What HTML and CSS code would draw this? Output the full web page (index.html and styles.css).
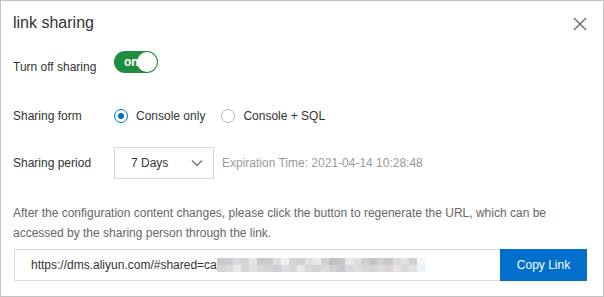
FILE: index.html
```html
<!DOCTYPE html>
<html>
<head>
<meta charset="utf-8">
<link rel="stylesheet" href="styles.css">
</head>
<body>
<div class="dialog">
  <div class="header">
    <div class="title">link sharing</div>
    <svg class="close" width="14" height="14" viewBox="0 0 14 14"><path d="M1 1L13 13M13 1L1 13" stroke="#6f7680" stroke-width="1.6" fill="none"/></svg>
  </div>
  <div class="row row-switch">
    <div class="label label-switch">Turn off sharing</div>
    <div class="switch"><span class="switch-text">on</span><span class="knob"></span></div>
  </div>
  <div class="row row-radio">
    <div class="label">Sharing form</div>
    <label class="radio"><span class="dot checked"></span>Console only</label>
    <label class="radio"><span class="dot"></span>Console + SQL</label>
  </div>
  <div class="row row-period">
    <div class="label">Sharing period</div>
    <div class="select"><span>7 Days</span>
      <svg width="12" height="8" viewBox="0 0 12 8"><path d="M1 1.5L6 6.5L11 1.5" stroke="#777" stroke-width="1.4" fill="none"/></svg>
    </div>
    <div class="expire">Expiration Time: 2021-04-14 10:28:48</div>
  </div>
  <p class="note">After the configuration content changes, please click the button to regenerate the URL, which can be accessed by the sharing person through the link.</p>
  <div class="link-row">
    <div class="link-input"><span>https://dms.aliyun.com/#shared=caf</span><svg class="blur" width="208" height="14" viewBox="0 0 208 14">
      <g>
        <rect x="0" y="0" width="8" height="7" fill="#c9c9cc"/><rect x="8" y="0" width="8" height="7" fill="#cbcbd3"/><rect x="16" y="0" width="8" height="7" fill="#dadade"/><rect x="24" y="0" width="8" height="7" fill="#d6d4d4"/><rect x="32" y="0" width="8" height="7" fill="#e6e6e4"/><rect x="40" y="0" width="8" height="7" fill="#c6cbca"/><rect x="48" y="0" width="8" height="7" fill="#c8cdcc"/><rect x="56" y="0" width="8" height="7" fill="#dddde0"/><rect x="64" y="0" width="8" height="7" fill="#eff0f1"/><rect x="72" y="0" width="8" height="7" fill="#d4d4d6"/><rect x="80" y="0" width="8" height="7" fill="#cfd1d0"/><rect x="88" y="0" width="8" height="7" fill="#dfe1de"/><rect x="96" y="0" width="8" height="7" fill="#e9e9e7"/><rect x="104" y="0" width="8" height="7" fill="#d0d0d0"/><rect x="112" y="0" width="8" height="7" fill="#c2bebf"/><rect x="120" y="0" width="8" height="7" fill="#cac7c9"/><rect x="128" y="0" width="8" height="7" fill="#e6eaee"/><rect x="136" y="0" width="8" height="7" fill="#dce0e4"/><rect x="144" y="0" width="8" height="7" fill="#cdcfd1"/><rect x="152" y="0" width="8" height="7" fill="#c3c5c6"/><rect x="160" y="0" width="8" height="7" fill="#cdcfd1"/><rect x="168" y="0" width="8" height="7" fill="#c8c8c8"/><rect x="176" y="0" width="8" height="7" fill="#dedad4"/><rect x="184" y="0" width="8" height="7" fill="#dde2e6"/><rect x="192" y="0" width="8" height="7" fill="#ced0d3"/><rect x="200" y="0" width="8" height="7" fill="#f2f6fa"/>
        <rect x="0" y="7" width="8" height="7" fill="#d3d3d3"/><rect x="8" y="7" width="8" height="7" fill="#dcdbd8"/><rect x="16" y="7" width="8" height="7" fill="#ebebee"/><rect x="24" y="7" width="8" height="7" fill="#d5d5d5"/><rect x="32" y="7" width="8" height="7" fill="#e1e0e0"/><rect x="40" y="7" width="8" height="7" fill="#d5d9d9"/><rect x="48" y="7" width="8" height="7" fill="#d1d3d4"/><rect x="56" y="7" width="8" height="7" fill="#cecccd"/><rect x="64" y="7" width="8" height="7" fill="#dcdde2"/><rect x="72" y="7" width="8" height="7" fill="#d8d8d8"/><rect x="80" y="7" width="8" height="7" fill="#e8e8e6"/><rect x="88" y="7" width="8" height="7" fill="#d6d6d6"/><rect x="96" y="7" width="8" height="7" fill="#d4d2d3"/><rect x="104" y="7" width="8" height="7" fill="#dfdcdc"/><rect x="112" y="7" width="8" height="7" fill="#d2d2d2"/><rect x="120" y="7" width="8" height="7" fill="#c8c9cc"/><rect x="128" y="7" width="8" height="7" fill="#d6d9dc"/><rect x="136" y="7" width="8" height="7" fill="#dedede"/><rect x="144" y="7" width="8" height="7" fill="#d8d8d8"/><rect x="152" y="7" width="8" height="7" fill="#d3d3d3"/><rect x="160" y="7" width="8" height="7" fill="#dcdcdc"/><rect x="168" y="7" width="8" height="7" fill="#d6d6d6"/><rect x="176" y="7" width="8" height="7" fill="#e7e3de"/><rect x="184" y="7" width="8" height="7" fill="#d8d8d8"/><rect x="192" y="7" width="8" height="7" fill="#dfe1e3"/><rect x="200" y="7" width="8" height="7" fill="#eef3f7"/>
      </g></svg></div>
    <div class="copy-btn">Copy Link</div>
  </div>
</div>
</body>
</html>
```
FILE: styles.css
```css
* { box-sizing: border-box; }
html, body { margin: 0; padding: 0; background: #fff; }
body { font-family: "Liberation Sans", Arial, sans-serif; font-size: 12px; color: #333; }

.dialog {
  width: 604px;
  height: 297px;
  border: 1px solid #c2c2c2;
  padding: 0 16px 0 12px;
  background: #fff;
}

.header {
  display: flex;
  justify-content: space-between;
  align-items: flex-start;
  padding-top: 11px;
  height: 50px;
}
.title { font-size: 16px; line-height: 22px; color: #333; }
.close { margin-top: 5px; margin-right: 0; }

.row { display: flex; align-items: center; }
.label { width: 101px; flex: none; color: #333; }

.row-switch { height: 22px; align-items: flex-start; }
.label-switch { line-height: 14px; padding-top: 9px; }
.switch {
  position: relative;
  width: 44px;
  height: 22px;
  border-radius: 11px;
  background: #1f8e3e;
  display: flex;
  align-items: center;
}
.switch-text { color: #fff; font-weight: bold; font-size: 12px; margin-left: 10px; }
.knob {
  position: absolute;
  right: 1px;
  top: 1px;
  width: 20px;
  height: 20px;
  border-radius: 50%;
  background: #fff;
}

.row-radio { height: 22px; margin-top: 32px; }
.radio { display: flex; align-items: center; margin-right: 16px; color: #333; }
.dot {
  width: 14px;
  height: 14px;
  border-radius: 50%;
  border: 1px solid #b8b8b8;
  margin-right: 8px;
  background: #fff;
  position: relative;
}
.dot.checked { border: 1.5px solid #0070cc; }
.dot.checked::after {
  content: "";
  position: absolute;
  left: 2.5px; top: 2.5px;
  width: 6px; height: 6px;
  border-radius: 50%;
  background: #0070cc;
}

.row-period { height: 32px; margin-top: 20px; }
.select {
  width: 100px;
  height: 32px;
  border: 1px solid #dadada;
  display: flex;
  align-items: center;
  justify-content: space-between;
  padding: 0 10px 0 16px;
  color: #333;
}
.expire { margin-left: 8px; color: #999; }

.note { margin: 24px 0 0; line-height: 20px; color: #666; }

.link-row { display: flex; margin-top: 6px; margin-left: 1px; height: 32px; }
.link-input {
  flex: 1;
  border: 1px solid #dcdcdc;
  border-right: none;
  display: flex;
  align-items: center;
  padding-left: 16px;
  color: #333;
  white-space: nowrap;
  overflow: hidden;
}
.blur { margin-left: -3px; flex: none; }
.copy-btn {
  width: 87px;
  background: #0070cc;
  color: #fff;
  display: flex;
  align-items: center;
  justify-content: center;
  font-size: 12px;
}
```
